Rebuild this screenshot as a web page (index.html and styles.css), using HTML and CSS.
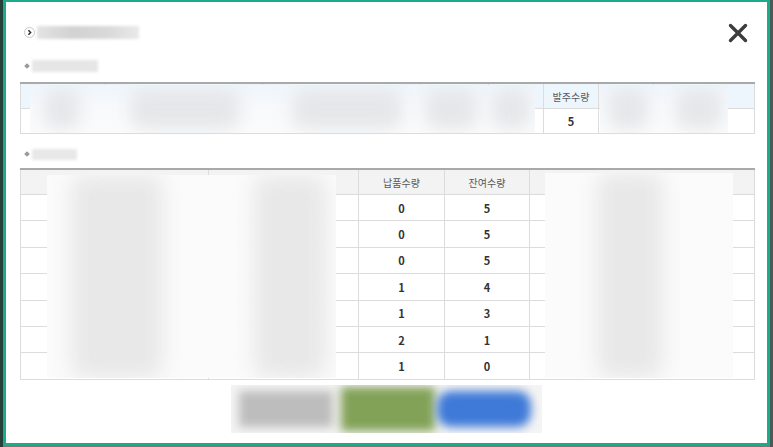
FILE: index.html
```html
<!DOCTYPE html>
<html lang="ko">

<head>
    <meta charset="UTF-8">
    <meta name="viewport" content="width=device-width, initial-scale=1.0">
    <title>발주 납품 내역</title>
    <link rel="stylesheet" href="styles.css">
</head>

<body>
    <div class="modal">
        <div class="modal-head">
            <div class="title">
                <span class="title-icon">
                    <svg width="11" height="11" viewBox="0 0 11 11">
                        <circle cx="5.5" cy="5.5" r="5" fill="#fff" stroke="#c8c8c8" />
                        <path d="M4.4 3.3 L6.6 5.5 L4.4 7.7" fill="none" stroke="#333" stroke-width="1.5" />
                    </svg>
                </span>
                <span class="blur-text title-text"></span>
            </div>
            <button class="close-btn" aria-label="닫기">
                <svg width="20" height="20" viewBox="0 0 20 20">
                    <path d="M2.5 2.5 L17.5 17.5 M17.5 2.5 L2.5 17.5" stroke="#3d3d3d" stroke-width="3.4" stroke-linecap="round" />
                </svg>
            </button>
        </div>

        <div class="sub-title first">
            <span class="bullet"></span>
            <span class="blur-text sub-text-1"></span>
        </div>

        <div class="table-wrap">
            <table class="grid order-table">
                <colgroup>
                    <col style="width:85px">
                    <col style="width:157px">
                    <col style="width:158px">
                    <col style="width:68px">
                    <col style="width:55px">
                    <col style="width:55px">
                    <col style="width:55px">
                    <col style="width:101px">
                </colgroup>
                <thead>
                    <tr>
                        <th></th>
                        <th></th>
                        <th></th>
                        <th></th>
                        <th></th>
                        <th>발주수량</th>
                        <th></th>
                        <th></th>
                    </tr>
                </thead>
                <tbody>
                    <tr>
                        <td></td>
                        <td></td>
                        <td></td>
                        <td></td>
                        <td></td>
                        <td>5</td>
                        <td></td>
                        <td></td>
                    </tr>
                </tbody>
            </table>
            <div class="haze haze-o1">
                <span class="smudge" style="left:14px;width:36px"></span>
                <span class="smudge" style="left:100px;width:110px"></span>
                <span class="smudge" style="left:262px;width:110px"></span>
                <span class="smudge" style="left:395px;width:52px"></span>
                <span class="smudge" style="left:462px;width:38px"></span>
            </div>
            <div class="haze haze-o2">
                <span class="smudge" style="left:8px;width:40px"></span>
                <span class="smudge" style="left:76px;width:46px"></span>
            </div>
        </div>

        <div class="sub-title second">
            <span class="bullet"></span>
            <span class="blur-text sub-text-2"></span>
        </div>

        <div class="table-wrap">
            <table class="grid delivery-table">
                <colgroup>
                    <col style="width:188px">
                    <col style="width:150px">
                    <col style="width:86px">
                    <col style="width:85px">
                    <col style="width:225px">
                </colgroup>
                <thead>
                    <tr>
                        <th></th>
                        <th></th>
                        <th>납품수량</th>
                        <th>잔여수량</th>
                        <th></th>
                    </tr>
                </thead>
                <tbody id="delivery-body">
                </tbody>
            </table>
            <div class="haze haze-d1">
                <span class="smudge tall" style="left:24px;width:92px"></span>
                <span class="smudge tall" style="left:207px;width:72px"></span>
            </div>
            <div class="haze haze-d2">
                <span class="smudge tall" style="left:52px;width:66px"></span>
            </div>
        </div>

        <div class="actions">
            <div class="btn-strip">
                <span class="btn btn-gray"></span>
                <span class="btn btn-green"></span>
                <span class="btn btn-blue"></span>
            </div>
        </div>
    </div>

    <script>
        const rows = [
            [0, 5], [0, 5], [0, 5], [1, 4], [1, 3], [2, 1], [1, 0]
        ];
        const body = document.getElementById('delivery-body');
        rows.forEach(r => {
            const tr = document.createElement('tr');
            tr.innerHTML = `
                <td></td>
                <td></td>
                <td>${r[0]}</td>
                <td>${r[1]}</td>
                <td></td>
            `;
            body.appendChild(tr);
        });
    </script>
</body>

</html>
```

FILE: styles.css
```css
html,
body {
    margin: 0;
    padding: 0;
}

body {
    width: 773px;
    height: 447px;
    background: linear-gradient(to right, #26413a 0, #26413a 3px, #6d7c77 3px, #6d7c77 770px, #4b5a55 770px);
    font-family: "Noto Sans CJK KR", "Noto Sans", sans-serif;
    overflow: hidden;
}

.modal {
    box-sizing: border-box;
    margin: 0 3px 0 3px;
    height: 446px;
    border: 3px solid #1aab8b;
    border-top-width: 2px;
    background: #fff;
    padding: 19px 13px 0 14px;
}

.modal-head {
    display: flex;
    justify-content: space-between;
    align-items: center;
    height: 22px;
}

.title {
    display: flex;
    align-items: center;
    padding-left: 4px;
}

.title-icon {
    display: flex;
    width: 11px;
    height: 11px;
}

.blur-text {
    display: inline-block;
    background: linear-gradient(to right, #e3e3e3, #d2d2d2 35%, #d9d9d9 70%, #e9e9e9);
    filter: blur(1.5px);
}

.title-text {
    width: 102px;
    height: 13px;
    margin-left: 2px;
}

.close-btn {
    border: 0;
    background: none;
    padding: 0;
    margin-right: 6px;
    margin-top: 2px;
    display: flex;
    cursor: pointer;
}

.sub-title {
    display: flex;
    align-items: center;
    height: 14px;
    padding-left: 5px;
}

.sub-title.first {
    margin-top: 16px;
}

.sub-title.second {
    margin-top: 13px;
}

.bullet {
    width: 4px;
    height: 4px;
    background: #9a9a9a;
    transform: rotate(45deg);
    margin-right: 3px;
}

.sub-text-1 {
    width: 66px;
    height: 12px;
    background: #e6e6e6;
}

.sub-text-2 {
    width: 45px;
    height: 11px;
    background: #e8e8e8;
}

.table-wrap {
    position: relative;
    width: 734px;
}

.order-table {
    margin-top: 9px;
}

.delivery-table {
    margin-top: 7px;
}

table.grid {
    width: 734px;
    table-layout: fixed;
    border-collapse: collapse;
    border-top: 2px solid #a9a9a9;
    border-left: 1px solid #d4d4d4;
    border-right: 1px solid #d4d4d4;
    border-bottom: 1px solid #d4d4d4;
    font-size: 10px;
}

table.grid th,
table.grid td {
    border: 1px solid #dcdcdc;
    padding: 0;
    text-align: center;
    color: #333;
}

table.grid th {
    font-weight: normal;
    color: #5a5a5a;
    height: 24px;
}

table.grid td {
    font-weight: bold;
    font-size: 11px;
}

.order-table th {
    background: #eef6fd;
    border-color: #d6e3ee;
}

.order-table td {
    height: 24px;
}

.delivery-table th {
    background: #f3f3f3;
}

.delivery-table td {
    height: 25.4px;
}

/* redacted areas */
.haze {
    position: absolute;
    background: rgba(251, 251, 251, 0.97);
    overflow: hidden;
}

.haze-o1 {
    left: 10px;
    top: 3px;
    width: 505px;
    height: 48px;
    background: linear-gradient(to bottom, #eff5fb, #f7f9fc 45%, #fbfbfb);
}

.haze-o2 {
    left: 580px;
    top: 3px;
    width: 128px;
    height: 48px;
    background: linear-gradient(to bottom, #eff5fb, #f7f9fc 45%, #fbfbfb);
}

.haze-d1 {
    left: 27px;
    top: 7px;
    width: 289px;
    height: 203px;
}

.haze-d2 {
    left: 525px;
    top: 5px;
    width: 188px;
    height: 205px;
}

.smudge {
    position: absolute;
    top: 4px;
    bottom: 4px;
    background: #e5e7e9;
    border-radius: 14px;
    filter: blur(8px);
}

.smudge.tall {
    top: 0;
    bottom: 0;
    background: #e8e8e8;
    filter: blur(10px);
}

.actions {
    display: flex;
    justify-content: center;
    margin-top: 5px;
    padding-right: 2px;
}

.btn-strip {
    display: flex;
    width: 311px;
    height: 48px;
    overflow: hidden;
    background: #f4f4f4;
}

.btn {
    flex: 1;
    filter: blur(5px);
}

.btn-gray {
    background: #bdbdbd;
    margin: 6px 4px 6px 8px;
}

.btn-green {
    background: #82a257;
    margin: 2px -4px 2px 4px;
}

.btn-blue {
    background: #3f7ad8;
    margin: 6px 10px 6px 6px;
    border-radius: 14px;
}
```
